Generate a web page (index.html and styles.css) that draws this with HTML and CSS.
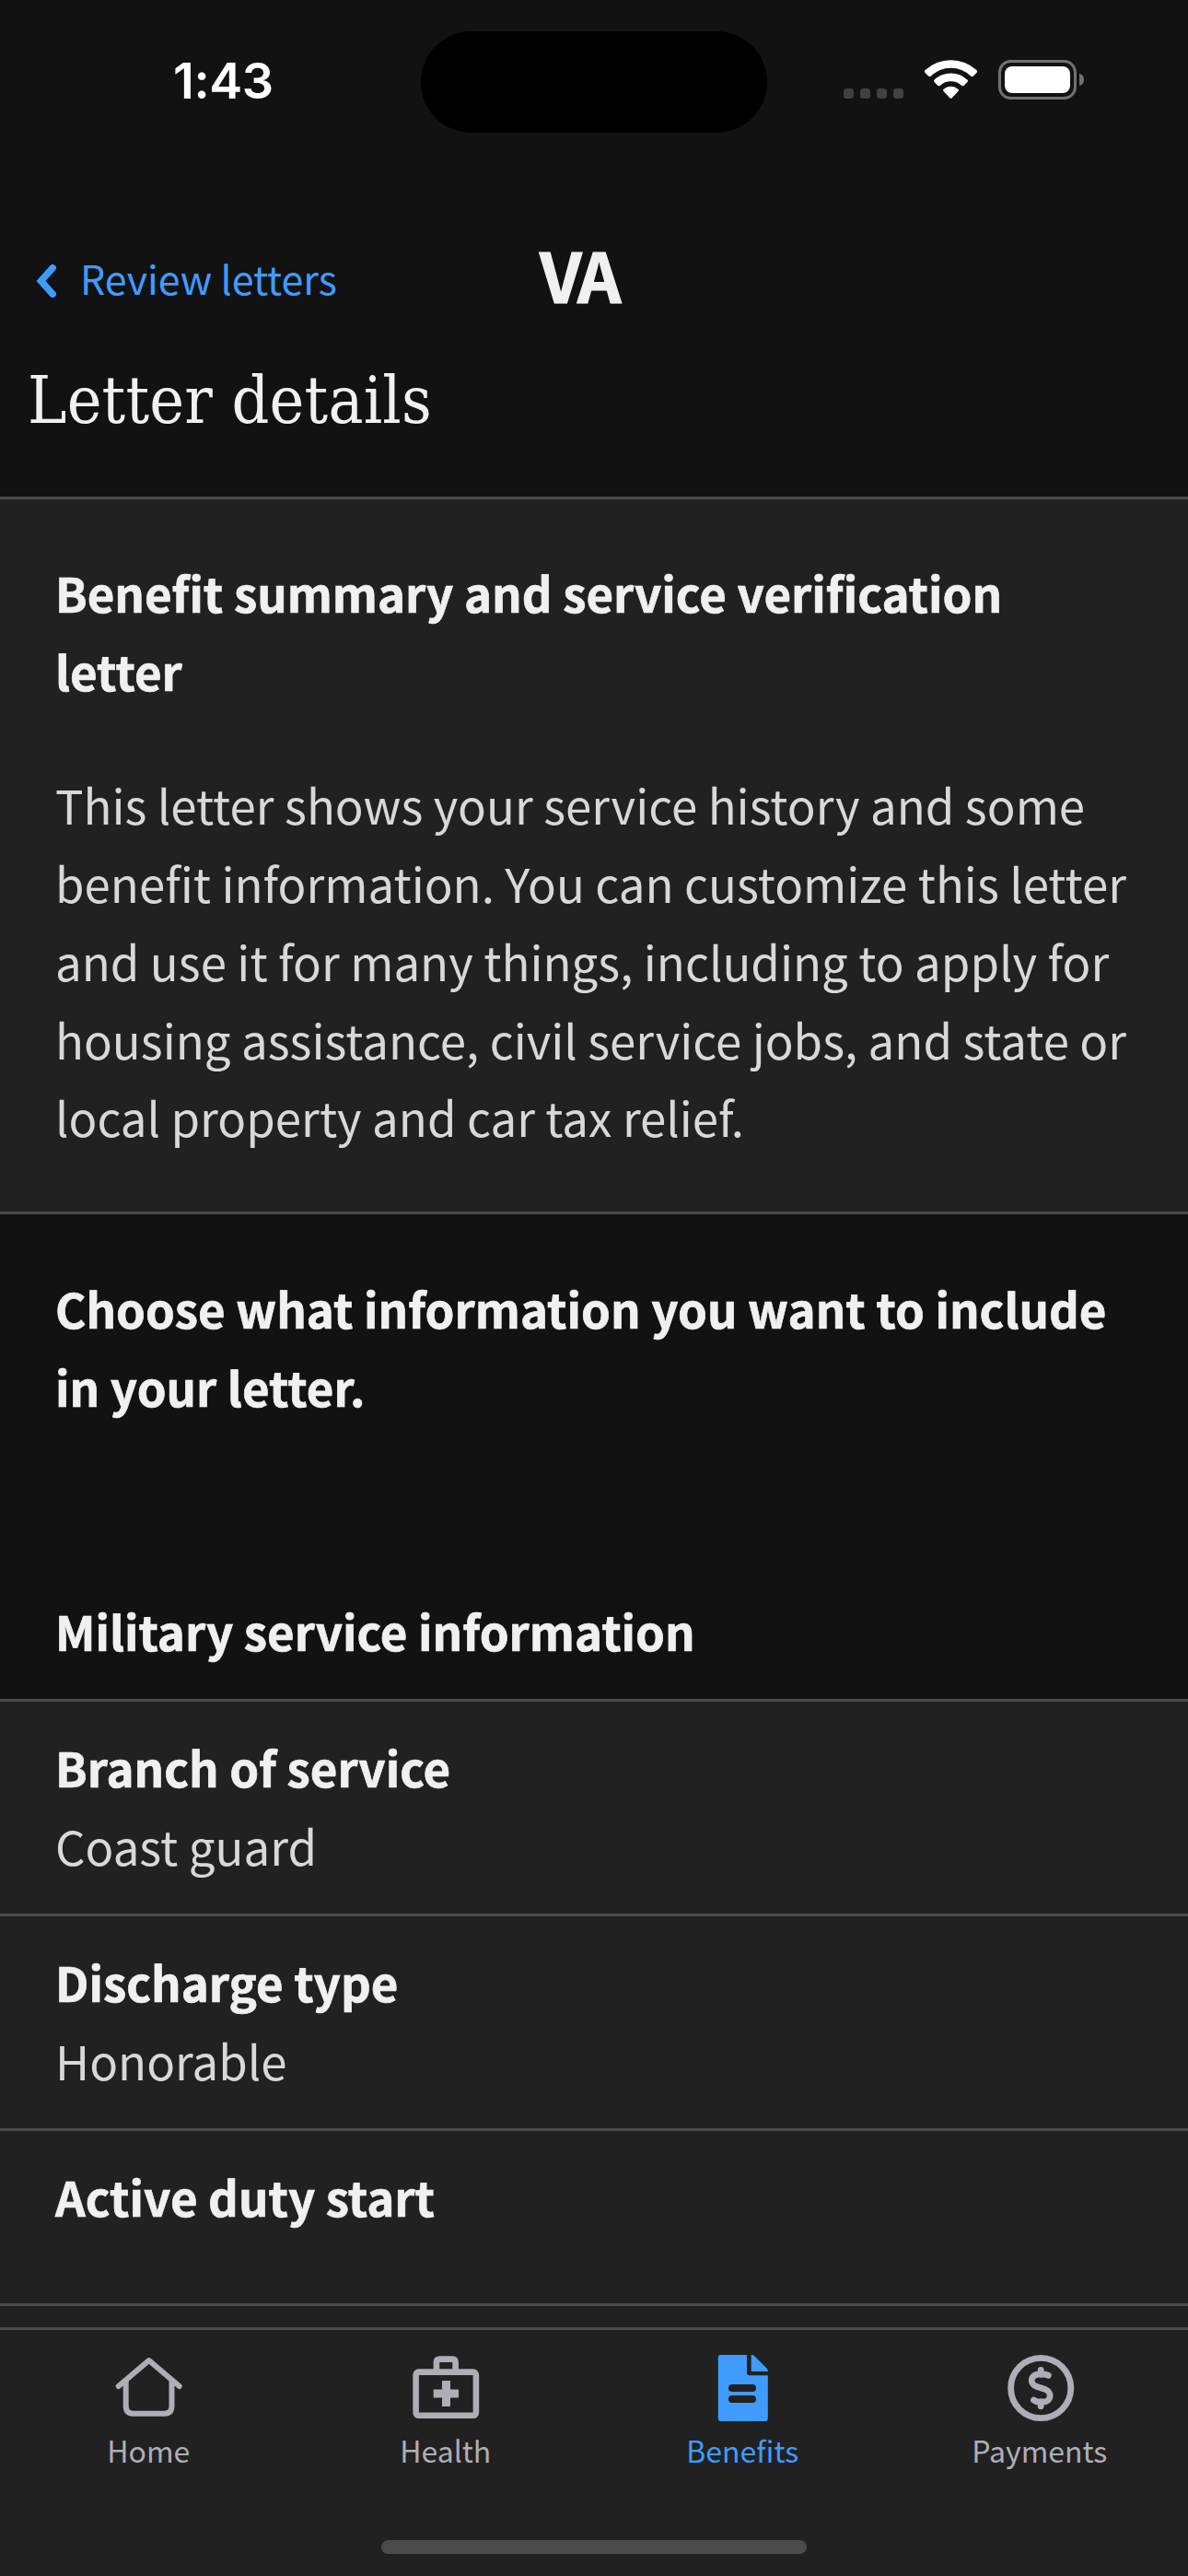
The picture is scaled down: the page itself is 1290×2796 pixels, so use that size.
FILE: index.html
```html
<!DOCTYPE html>
<html lang="en">
<head>
<meta charset="utf-8">
<title>Letter details</title>
<link rel="stylesheet" href="styles.css">
</head>
<body>
<div class="screen">
  <div class="status">
    <div class="time">1:43</div>
    <div class="island"></div>
    <svg class="indicators" viewBox="0 0 262 44" aria-hidden="true">
      <g fill="#414141"><rect x="0" y="31" width="11" height="11" rx="3.5"/><rect x="18" y="31" width="11" height="11" rx="3.5"/><rect x="36" y="31" width="11" height="11" rx="3.5"/><rect x="54" y="31" width="11" height="11" rx="3.5"/></g>
      <g fill="#fff">
        <path d="M88.500 14Q87 12.500 88.700 11A41 41 0 0 1 144.300 11Q146 12.500 144.500 14L141 17.500Q139.500 19 138 17.500A31 31 0 0 0 95 17.500Q93.500 19 92 17.500Z"/>
        <path d="M98.500 24Q97.300 22.700 98.700 21.500A26 26 0 0 1 134.300 21.500Q135.700 22.700 134.500 24L130.800 27.700Q129.500 29 128 27.700A17 17 0 0 0 105 27.700Q103.500 29 102.200 27.700Z"/>
        <path d="M108.500 34Q107.300 32.700 108.700 31.700A12 12 0 0 1 124.300 31.700Q125.700 32.700 124.500 34L117.700 41.200Q116.500 42.300 115.300 41.200Z"/>
        <rect x="175" y="7" width="71" height="29" rx="8"/>
      </g>
      <rect x="169.500" y="1.500" width="82" height="40" rx="12" fill="none" stroke="#717171" stroke-width="3"/>
      <path d="M256 15Q261 16 261 21.500Q261 27 256 28Z" fill="#717171"/>
    </svg>
  </div>
  <header class="header">
    <div class="nav">
      <svg class="chev" viewBox="0 0 22 36" aria-hidden="true"><path d="M18.200 3.800L5.500 18L18.200 32.200" fill="none" stroke="#409bff" stroke-width="7.400" stroke-linecap="round"/></svg>
      <span class="back">Review letters</span>
      <span class="logo">VA</span>
    </div>
    <h1 class="title">Letter details</h1>
  </header>
  <main class="main">
    <section class="card">
      <h2 class="bold">Benefit summary and service verification letter</h2>
      <p class="text body">This letter shows your service history and some<br>benefit information. You can customize this letter<br>and use it for many things, including to apply for<br>housing assistance, civil service jobs, and state or<br>local property and car tax relief.</p>
    </section>
    <div class="intro">
      <h2 class="bold">Choose what information you want to include in your letter.</h2>
      <h2 class="bold group">Military service information</h2>
    </div>
    <div class="row"><div class="bold">Branch of service</div><div class="text">Coast guard</div></div>
    <div class="row"><div class="bold">Discharge type</div><div class="text">Honorable</div></div>
    <div class="row last"><div class="bold">Active duty start</div></div>
  </main>
  <nav class="tabs">
    <div class="tab">
      <svg class="icon" viewBox="0 0 80 80" aria-hidden="true"><g fill="none" stroke="#aeaeb6" stroke-width="6" stroke-linecap="round" stroke-linejoin="round"><path d="M7.700 38L40.700 10L73.700 38"/><path d="M15.700 33V59.500Q15.700 67.700 23.500 67.700H57.500Q65.500 67.700 65.500 59.500V33"/></g></svg>
      <span>Home</span>
    </div>
    <div class="tab">
      <svg class="icon" viewBox="0 0 80 80" aria-hidden="true"><g fill="none" stroke="#aeaeb6" stroke-width="6.600"><rect x="7.600" y="22.600" width="65.300" height="47.100" rx="3"/><path d="M29.900 22V12Q29.900 8.600 33.500 8.600H47Q50.600 8.600 50.600 12V22"/></g><path d="M36 32H45V41.500H54V50.500H45V60H36V50.500H26.700V41.500H36Z" fill="#aeaeb6"/></svg>
      <span>Health</span>
    </div>
    <div class="tab active">
      <svg class="icon" viewBox="0 0 80 80" aria-hidden="true"><path fill="#409bff" fill-rule="evenodd" d="M17 4H45V23.500Q45 26.300 48 26.300H67.800V73Q67.800 76 65 76H17Q13.800 76 13.800 73V7Q13.800 4 17 4ZM29 36Q25 36 25 40T29 44H51Q55 44 55 40T51 36ZM29 48Q25 48 25 52T29 56H51Q55 56 55 52T51 48Z"/><path fill="#409bff" d="M49.700 4Q52 4 53 5L67 19Q67.800 20 67.800 22H49.700Z"/></svg>
      <span>Benefits</span>
    </div>
    <div class="tab">
      <svg class="icon" viewBox="0 0 80 80" aria-hidden="true"><g fill="none" stroke="#aeaeb6" stroke-width="6.800" stroke-linecap="round"><circle cx="41.200" cy="40" r="32.600"/><path d="M49.300 26.300Q47 25 44 25H39.500C29.500 25 28.500 36 37 38.600L45.500 41.200C54 44 52.500 55 44 55H39Q36 55 33.500 53"/><path d="M41.200 20.500V25M41.200 55V59.800"/></g></svg>
      <span>Payments</span>
    </div>
  </nav>
  <div class="home-area"><div class="home-bar"></div></div>
</div>
</body>
</html>
```
FILE: styles.css
```css
* { box-sizing: border-box; }
body { margin: 0; background: #121212; }
.screen {
  width: 1290px;
  height: 2796px;
  display: flex;
  flex-direction: column;
  overflow: hidden;
  color: #f0f0f0;
  font-family: "Noto Sans CJK SC", "Source Sans Pro", sans-serif;
}
h1, h2, p { margin: 0; font-weight: 400; }
.status {
  height: 177px;
  flex: none;
  display: grid;
  grid-template-columns: 457px 376px 457px;
  align-items: start;
}
.time {
  padding: 55px 0 0 188px;
  font: 600 54px/66px Inter, sans-serif;
  letter-spacing: -0.4px;
  color: #fff;
}
.island { height: 110px; margin-top: 34px; border-radius: 55px; background: #000; }
.indicators { width: 262px; height: 44px; margin: 65px 0 0 83px; }
.header { height: 365px; flex: none; border-bottom: 3px solid #4b4b4b; }
.nav { height: 213px; display: flex; align-items: flex-start; padding-left: 39px; }
.chev { width: 22px; height: 36px; margin-top: 110px; }
.back { margin: 91px 0 0 26px; width: 499px; color: #409bff; font-size: 43px; line-height: 66px; letter-spacing: -0.1px; }
.logo {
  margin-top: 80px;
  font-size: 74px;
  line-height: 80px;
  font-weight: 700;
  letter-spacing: -3.5px;
  -webkit-text-stroke: 1.2px #f0f0f0;
}
.title {
  padding-left: 30px;
  font: 400 71px/90px "DejaVu Serif Condensed", "DejaVu Serif", serif;
  font-stretch: condensed;
  letter-spacing: 0.2px;
}
.main { height: 1984px; flex: none; overflow: hidden; background: #212121; }
.card { height: 776px; padding: 59px 60px 0; border-bottom: 3px solid #4b4b4b; }
.bold { font-size: 51px; line-height: 84.7px; font-weight: 700; -webkit-text-stroke: 0.7px #f0f0f0; }
.text { font-size: 51px; line-height: 84.7px; color: #d8d8d8; }
.body { margin-top: 61px; white-space: nowrap; }
.intro { height: 526px; padding: 60px 60px 0; background: #121212; }
.group { margin-top: 181px; }
.row { border-top: 3px solid #4b4b4b; height: 233px; padding: 29px 60px 0; }
.last { height: 193px; border-bottom: 3px solid #4b4b4b; }
.tabs {
  height: 170px;
  flex: none;
  display: grid;
  grid-template-columns: repeat(4, 1fr);
  background: #212121;
  border-top: 3px solid #4b4b4b;
}
.tab { display: flex; flex-direction: column; align-items: center; padding-top: 23px; color: #aeaeb6; font-size: 32px; line-height: 55px; }
.active { color: #409bff; }
.icon { width: 80px; height: 80px; }
.home-area { height: 100px; flex: none; background: #212121; padding-top: 61px; }
.home-bar { width: 462px; height: 15px; margin: 0 auto; border-radius: 8px; background: #4b4b4b; }
```
